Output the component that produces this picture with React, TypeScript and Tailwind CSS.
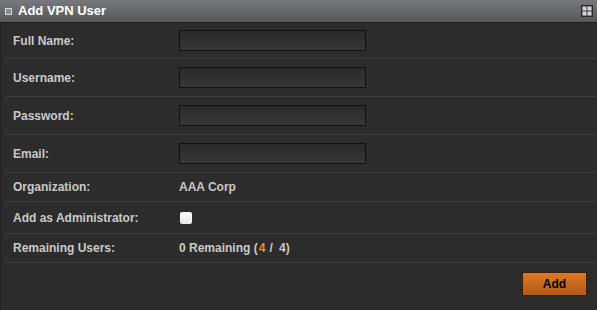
import React from "react"

const font = { fontFamily: '"Liberation Sans", Arial, sans-serif' }

function TextField() {
    return (
        <input
            type="text"
            className="w-[187px] h-[21px] border border-[#121212] bg-gradient-to-b from-[#2a2a2a] to-[#373737] outline-none text-[12px] text-[#ddd] px-1"
        />
    )
}

function Row({ label, children, h }: { label: string; children: React.ReactNode; h: string }) {
    return (
        <div className={`flex items-center border-b border-[#3c3c3c] ${h}`}>
            <div className="w-[174px] pl-[8px] text-[12px] font-bold text-[#c9c9c9]">{label}</div>
            <div className="flex items-center text-[12px] font-bold text-[#c9c9c9]">{children}</div>
        </div>
    )
}

export default function App() {
    return (
        <div className="w-[597px] h-[310px] bg-[#2c2c2c] flex flex-col" style={font}>
            <div className="h-[23px] flex items-center justify-between px-[5px] bg-gradient-to-b from-[#75797d] to-[#55585b] border-b border-[#1e1e1e]">
                <div className="flex items-center gap-[6px]">
                    <div className="w-[7px] h-[7px] border border-[#d8d8d8] bg-[#8a8c8e]" />
                    <span className="text-[13px] font-bold text-white">Add VPN User</span>
                </div>
                <svg width="12" height="12" viewBox="0 0 12 12" className="mr-[-1px]">
                    <rect x="0.5" y="0.5" width="11" height="11" fill="#3a3a3a" stroke="#2a2a2a" />
                    <rect x="1.5" y="1.5" width="4" height="4" fill="#d6d6d6" />
                    <rect x="6.5" y="1.5" width="4" height="4" fill="#d6d6d6" />
                    <rect x="1.5" y="6.5" width="4" height="4" fill="#d6d6d6" />
                    <rect x="6.5" y="6.5" width="4" height="4" fill="#d6d6d6" />
                </svg>
            </div>
            <div className="flex-1 flex flex-col pl-[3px] pr-[3px] border-l-2 border-[#242424]">
                <Row label="Full Name:" h="h-[36px]"><TextField /></Row>
                <Row label="Username:" h="h-[38px]"><TextField /></Row>
                <Row label="Password:" h="h-[38px]"><TextField /></Row>
                <Row label="Email:" h="h-[38px]"><TextField /></Row>
                <Row label="Organization:" h="h-[29px]">AAA Corp</Row>
                <Row label="Add as Administrator:" h="h-[32px]">
                    <div className="w-[12px] h-[12px] ml-[1px] rounded-[2px] bg-gradient-to-b from-white to-[#e6e6e6]" />
                </Row>
                <Row label="Remaining Users:" h="h-[29px]">
                    <span>
                        0 Remaining (<span className="text-[#e8901c] mx-[1px]">4</span>
                        <span className="mx-[3px]">/</span> 4)
                    </span>
                </Row>
                <div className="flex justify-end pt-[9px] pr-[7px]">
                    <button className="w-[65px] h-[24px] border border-[#3a1f08] bg-gradient-to-b from-[#dc7a24] to-[#b5581a] text-[12px] font-bold text-black">
                        Add
                    </button>
                </div>
            </div>
        </div>
    )
}
